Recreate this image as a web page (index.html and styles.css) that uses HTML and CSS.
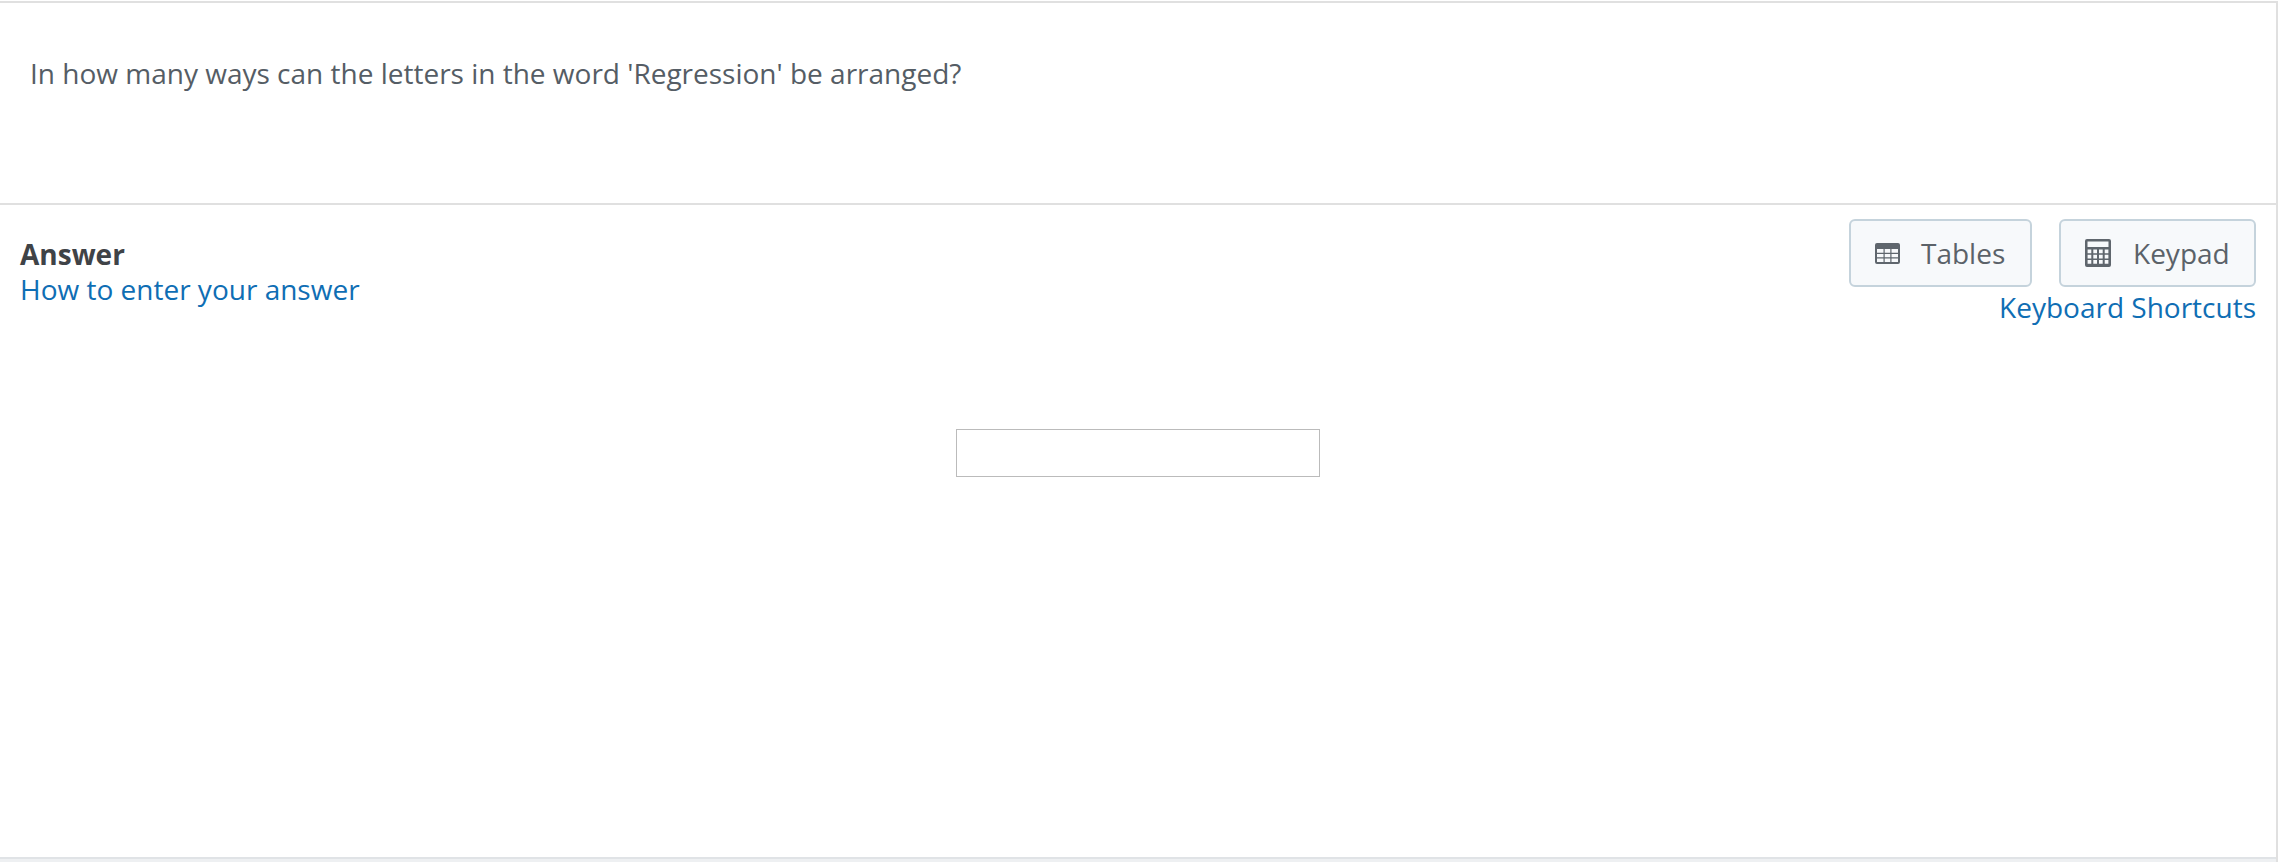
FILE: index.html
```html
<!DOCTYPE html>
<html lang="en">
<head>
<meta charset="utf-8">
<title>Question</title>
<link rel="stylesheet" href="styles.css">
</head>
<body>
<main class="panel">
  <section class="question">
    <p class="question-text">In how many ways can the letters in the word 'Regression' be arranged?</p>
  </section>
  <section class="answer">
    <header class="answer-head">
      <div class="answer-title">
        <strong class="answer-label">Answer</strong>
        <a class="link" href="#">How to enter your answer</a>
      </div>
      <div class="tools">
        <div class="tool-buttons">
          <button class="tool-btn tool-tables" type="button">
            <svg class="icon icon-table" viewBox="0 0 25 21" aria-hidden="true"><path fill-rule="evenodd" d="M2 0h21a2 2 0 0 1 2 2v17a2 2 0 0 1-2 2H2a2 2 0 0 1-2-2V2a2 2 0 0 1 2-2zM2 6v3.700h6.500V6zm7.700 0v3.700h5.600V6zm6.800 0v3.700H23V6zM2 10.900v3.400h6.500v-3.400zm7.700 0v3.400h5.600v-3.400zm6.800 0v3.400H23v-3.400zM2 15.500V19h6.500v-3.500zm7.700 0V19h5.600v-3.500zm6.800 0V19H23v-3.500z"/></svg>
            <span>Tables</span>
          </button>
          <button class="tool-btn tool-keypad" type="button">
            <svg class="icon icon-keypad" viewBox="0 0 26 28" aria-hidden="true"><path fill-rule="evenodd" d="M2 0h22a2 2 0 0 1 2 2v24a2 2 0 0 1-2 2H2a2 2 0 0 1-2-2V2a2 2 0 0 1 2-2zM2.500 2.500V8h21V2.500zM2.600 10.500v3.700h3.700v-3.700zm5.700 0v3.700H12v-3.700zm5.700 0v3.700h3.700v-3.700zm5.700 0v3.700h3.700v-3.700zM2.600 15.800v3.700h3.700v-3.700zm5.700 0v3.700H12v-3.700zm5.700 0v3.700h3.700v-3.700zm5.700 0v3.700h3.700v-3.700zM2.600 21.100v3.700h3.700v-3.700zm5.700 0v3.700H12v-3.700zm5.700 0v3.700h3.700v-3.700zm5.700 0v3.700h3.700v-3.700z"/></svg>
            <span>Keypad</span>
          </button>
        </div>
        <a class="link" href="#">Keyboard Shortcuts</a>
      </div>
    </header>
    <div class="answer-body">
      <input class="answer-input" type="text" aria-label="Answer">
    </div>
  </section>
  <div class="panel-foot"></div>
</main>
</body>
</html>
```

FILE: styles.css
```css
* {
  box-sizing: border-box;
}

html,
body {
  margin: 0;
  height: 100%;
}

body {
  background: #fff;
  font-family: "Open Sans", "Noto Sans", sans-serif;
  overflow: hidden;
}

.panel {
  display: flex;
  flex-direction: column;
  height: 861px;
  margin-top: 1px;
  margin-right: 1px;
  background: #fff;
  border-top: 2px solid #e0e0e0;
  border-right: 2px solid #e0e0e0;
}

.question {
  height: 202px;
  flex: none;
  padding: 50px 30px 0;
  border-bottom: 2px solid #e0e0e0;
}

.question-text {
  margin: 0;
  font-size: 28px;
  line-height: 40px;
  color: #555d65;
}

.answer {
  flex: 1;
  display: flex;
  flex-direction: column;
  border-bottom: 2px solid #e0e3e6;
}

.panel-foot {
  flex: none;
  height: 3px;
  background: #eef0f2;
}

.answer-head {
  display: flex;
  justify-content: space-between;
  padding: 14px 20px 0 20px;
}

.answer-title {
  display: flex;
  flex-direction: column;
  padding-top: 18px;
}

.answer-label {
  font-size: 28px;
  line-height: 34px;
  font-weight: 700;
  color: #3f4347;
}

.link {
  font-size: 28px;
  line-height: 36px;
  color: #0f6eb4;
  text-decoration: none;
}

.tools {
  display: flex;
  flex-direction: column;
  align-items: flex-end;
}

.tool-buttons {
  display: flex;
  gap: 27px;
  margin-bottom: 2px;
}

.tool-btn {
  display: flex;
  align-items: center;
  height: 68px;
  padding: 0 24px;
  font-family: inherit;
  font-size: 28px;
  color: #5b6269;
  background: #f7f9fb;
  border: 2px solid #c5d3dc;
  border-radius: 6px;
}

.tool-tables {
  width: 183px;
  gap: 21px;
}

.tool-keypad {
  width: 197px;
  gap: 22px;
}

.icon {
  display: block;
  flex: none;
  fill: #5f666d;
}

.icon-table {
  width: 25px;
  height: 21px;
}

.icon-keypad {
  width: 26px;
  height: 28px;
}

.answer-body {
  display: flex;
  justify-content: center;
  padding-top: 104px;
}

.answer-input {
  width: 364px;
  height: 48px;
  background: #fff;
  border: 1px solid #bbb;
  border-radius: 0;
  outline: none;
}
```
